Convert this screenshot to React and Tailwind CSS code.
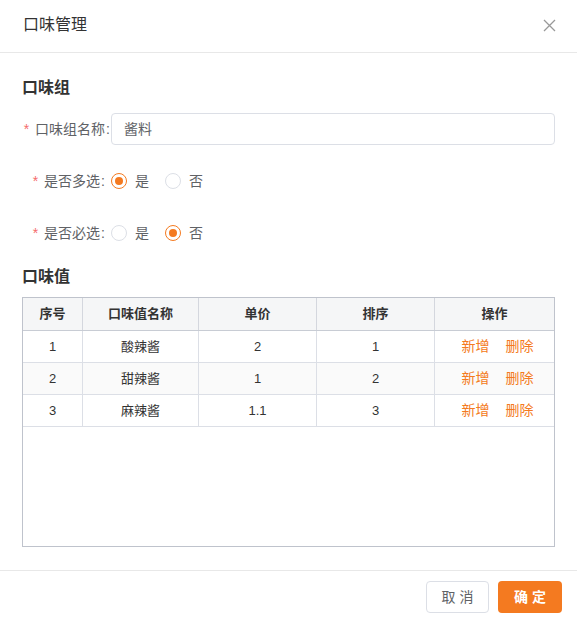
import React, { useState } from 'react';

const rows = [
    { id: 1, name: '酸辣酱', price: '2', sort: '1' },
    { id: 2, name: '甜辣酱', price: '1', sort: '2' },
    { id: 3, name: '麻辣酱', price: '1.1', sort: '3' },
];

const cols = ['w-[60px]', 'w-[116px]', 'w-[118px]', 'w-[118px]', 'flex-1'];

const Radio = ({ checked, label, onClick }) => (
    <button type="button" onClick={onClick} className="flex items-center">
        <span
            className={`w-4 h-4 rounded-full border flex items-center justify-center ${
                checked ? 'border-[#f47a20]' : 'border-[#dcdfe6]'
            }`}
        >
            {checked && <span className="w-2 h-2 rounded-full bg-[#f47a20]" />}
        </span>
        <span className="ml-2 text-[14px] text-[#606266]">{label}</span>
    </button>
);

const FormLabel = ({ children, width }) => (
    <div className={`${width} shrink-0 flex justify-end items-center whitespace-nowrap text-[14px] text-[#606266]`}>
        <span className="text-[#f56c6c] mr-[6px]">*</span>
        <span>{children}</span>
        <span className="ml-[1px]">:</span>
    </div>
);

export default function App() {
    const [multi, setMulti] = useState(true);
    const [required, setRequired] = useState(false);

    return (
        <div
            className="w-[577px] h-[622px] bg-white flex flex-col text-[#333]"
            style={{ fontFamily: '"Liberation Sans", "Noto Sans CJK SC", sans-serif' }}
        >
            {/* header */}
            <div className="h-[53px] border-b border-[#e8e8e8] flex items-center justify-between pl-[23px] pr-[21px] pb-[2px]">
                <span className="text-[16px] text-[#333]">口味管理</span>
                <svg width="13" height="13" viewBox="0 0 13 13">
                    <path d="M1 1L12 12M12 1L1 12" stroke="#999" strokeWidth="1.3" />
                </svg>
            </div>

            {/* body */}
            <div className="flex-1 px-[22px] pt-[24px]">
                <h3 className="text-[16px] font-bold leading-[22px] text-[#333]">口味组</h3>

                <div className="flex items-center mt-[14px]">
                    <FormLabel width="w-[88px]">口味组名称</FormLabel>
                    <div className="flex-1 ml-[1px] h-[32px] border border-[#dcdfe6] rounded-[4px] flex items-center px-[12px] text-[14px] text-[#606266]">
                        酱料
                    </div>
                </div>

                <div className="flex items-center mt-[26px] h-[20px]">
                    <FormLabel width="w-[83px]">是否多选</FormLabel>
                    <div className="flex items-center gap-[16px] ml-[6px]">
                        <Radio checked={multi} label="是" onClick={() => setMulti(true)} />
                        <Radio checked={!multi} label="否" onClick={() => setMulti(false)} />
                    </div>
                </div>

                <div className="flex items-center mt-[32px] h-[20px]">
                    <FormLabel width="w-[83px]">是否必选</FormLabel>
                    <div className="flex items-center gap-[16px] ml-[6px]">
                        <Radio checked={required} label="是" onClick={() => setRequired(true)} />
                        <Radio checked={!required} label="否" onClick={() => setRequired(false)} />
                    </div>
                </div>

                <h3 className="text-[16px] font-bold leading-[22px] text-[#333] mt-[23px]">口味值</h3>

                {/* table */}
                <div className="mt-[9px] h-[250px] border border-[#bfc3cc] text-[13px]">
                    <div className="flex h-[33px] bg-[#f5f6f7] border-b border-[#c8ccd4] font-bold text-[#333]">
                        {['序号', '口味值名称', '单价', '排序', '操作'].map((h, i) => (
                            <div
                                key={h}
                                className={`${cols[i]} flex items-center justify-center ${
                                    i < 4 ? 'border-r border-[#d4d7de]' : ''
                                }`}
                            >
                                {h}
                            </div>
                        ))}
                    </div>
                    {rows.map((r, idx) => (
                        <div
                            key={r.id}
                            className={`flex h-[32px] border-b border-[#dcdfe6] ${idx === 1 ? 'bg-[#fafafa]' : ''}`}
                        >
                            <div className={`${cols[0]} flex items-center justify-center border-r border-[#dcdfe6]`}>{r.id}</div>
                            <div className={`${cols[1]} flex items-center justify-center border-r border-[#dcdfe6]`}>{r.name}</div>
                            <div className={`${cols[2]} flex items-center justify-center border-r border-[#dcdfe6]`}>{r.price}</div>
                            <div className={`${cols[3]} flex items-center justify-center border-r border-[#dcdfe6]`}>{r.sort}</div>
                            <div className={`${cols[4]} flex items-center justify-center gap-[16px] pl-[6px] text-[14px] text-[#f47a20]`}>
                                <span>新增</span>
                                <span>删除</span>
                            </div>
                        </div>
                    ))}
                </div>
            </div>

            {/* footer */}
            <div className="h-[52px] border-t border-[#e8e8e8] flex justify-end items-start gap-[9px] pt-[10px] pr-[15px]">
                <button className="w-[63px] h-[32px] border border-[#dcdfe6] rounded-[4px] text-[14px] text-[#606266] tracking-[4px] pl-[4px]">
                    取消
                </button>
                <button className="w-[64px] h-[32px] rounded-[4px] bg-[#f47a20] text-[14px] text-white font-bold tracking-[4px] pl-[4px]">
                    确定
                </button>
            </div>
        </div>
    );
}
